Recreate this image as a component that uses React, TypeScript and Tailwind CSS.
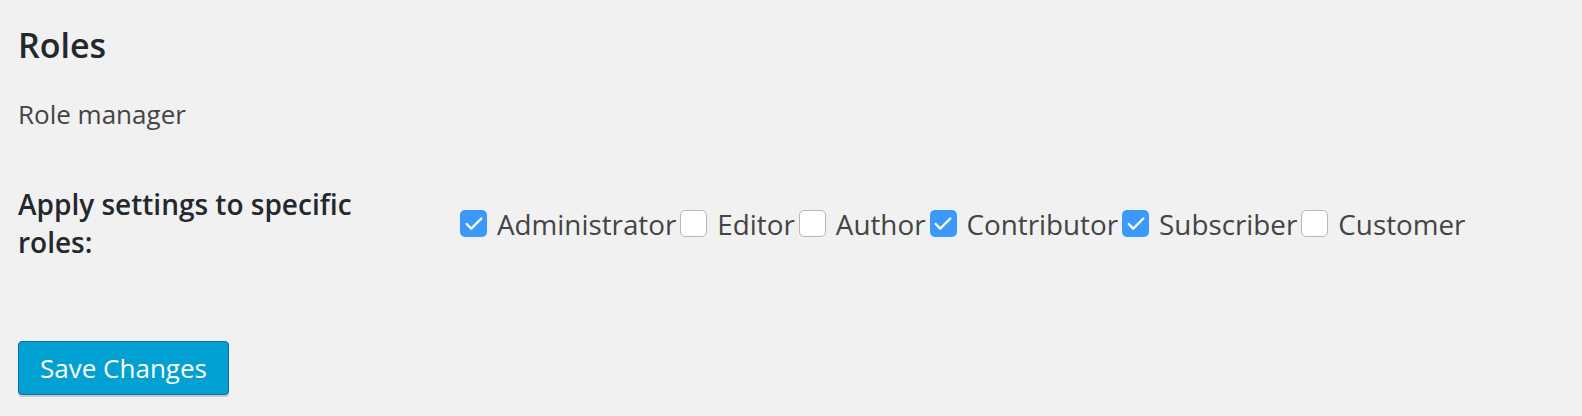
import { Check } from 'lucide-react'

const roles = [
  { name: 'Administrator', checked: true },
  { name: 'Editor', checked: false },
  { name: 'Author', checked: false },
  { name: 'Contributor', checked: true },
  { name: 'Subscriber', checked: true },
  { name: 'Customer', checked: false },
]

const Box = ({ checked }: { checked: boolean }) =>
  checked ? (
    <span className="flex h-[27px] w-[27px] shrink-0 items-center justify-center rounded-[5px] bg-[#3b99fc]">
      <Check className="h-[22px] w-[22px] text-white" strokeWidth={2.5} />
    </span>
  ) : (
    <span className="h-[27px] w-[27px] shrink-0 rounded-[5px] border border-[#b8b8b8] bg-white" />
  )

export default function App() {
  return (
    <div className="min-h-[416px] bg-[#f1f1f1] pl-[18px] font-['Open_Sans',sans-serif] text-[#444]">
      <h2 className="pt-[22px] text-[34px] font-semibold leading-[46px] text-[#23282d]">Roles</h2>
      <p className="mt-[28px] text-[26px] leading-[36px]">Role manager</p>
      <div className="mt-[53px] flex">
        <div className="w-[442px] shrink-0 text-[28px] font-semibold leading-[38px] text-[#23282d]">
          Apply settings to specific
          <br />
          roles:
        </div>
        <div className="flex items-center pt-[1px] text-[27.8px] leading-[38px]">
          {roles.map((r) => (
            <label key={r.name} className="mr-[4px] flex items-center gap-[10px]">
              <Box checked={r.checked} />
              <span>{r.name}</span>
            </label>
          ))}
        </div>
      </div>
      <button className="mt-[80px] h-[54px] w-[211px] rounded-[4px] border border-[#0073aa] bg-[#00a0d2] text-[26px] text-white shadow-[0_2px_0_#c9c9c9]">
        Save Changes
      </button>
    </div>
  )
}
